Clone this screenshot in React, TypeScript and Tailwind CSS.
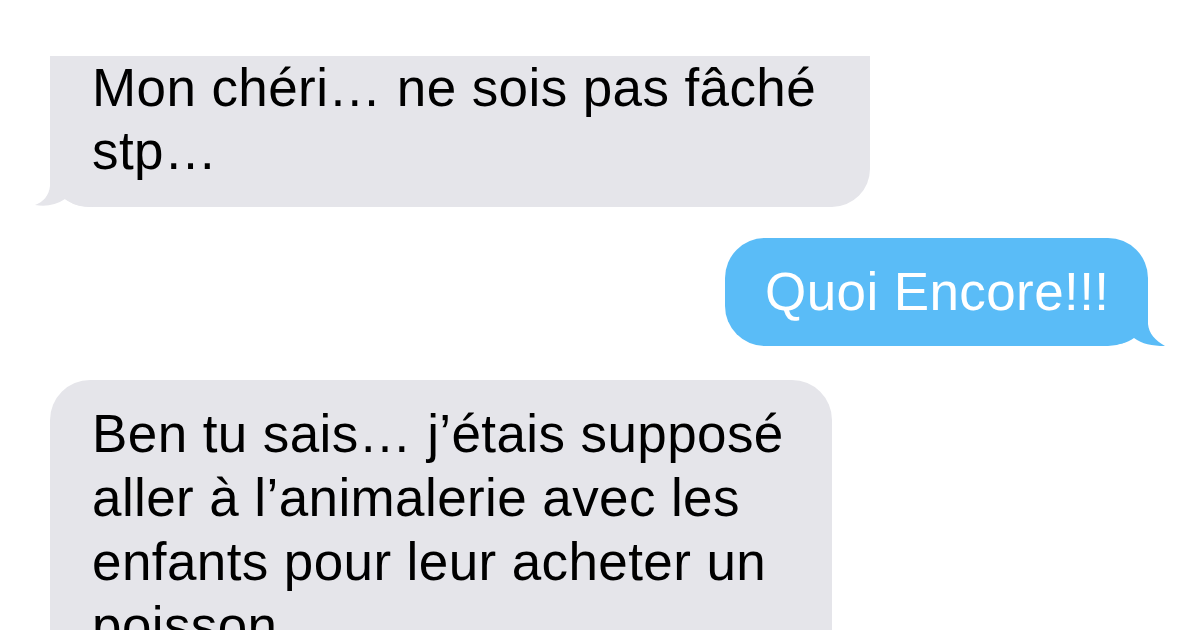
import React from "react";

const gray = "#e5e5ea";
const blue = "#5abcf7";

function TailLeft({ color }: { color: string }) {
    return (
        <svg className="absolute left-[-16px] bottom-[-3px]" width="60" height="48" viewBox="0 0 60 48">
            <path d="M16 0 L16 24 C15 34 9 40 1 43 C12 45 22 43 31 37 C38 42 46 45 60 45 L60 0 Z" fill={color} />
        </svg>
    );
}

function TailRight({ color }: { color: string }) {
    return (
        <svg className="absolute right-[-18px] bottom-[-2px]" width="60" height="48" viewBox="0 0 60 48">
            <path d="M42 0 L42 24 C43 34 49 40 59 46 C46 46 36 44 28 38 C21 43 13 45 0 45 L0 0 Z" fill={color} />
        </svg>
    );
}

export default function App() {
    return (
        <div className="w-[1200px] h-[630px] overflow-hidden bg-white flex flex-col font-['Liberation_Sans',Arial,sans-serif] text-[53px] tracking-[0.4px] text-black">
            {/* Received */}
            <div className="relative shrink-0 ml-[50px] mt-[56px] w-[820px] h-[151px] rounded-b-[38px] pl-[42px] leading-[63px] whitespace-nowrap" style={{ backgroundColor: gray }}>
                <TailLeft color={gray} />
                <div className="relative">
                    Mon chéri… ne sois pas fâché
                    <br />
                    stp…
                </div>
            </div>

            {/* Sent */}
            <div className="relative shrink-0 self-end mr-[52px] mt-[31px] w-[423px] h-[108px] rounded-[40px] pl-[40px] pt-[22px] leading-[63px] whitespace-nowrap text-white" style={{ backgroundColor: blue }}>
                <TailRight color={blue} />
                <div className="relative">Quoi Encore!!!</div>
            </div>

            {/* Received */}
            <div className="relative shrink-0 ml-[50px] mt-[34px] w-[782px] h-[320px] rounded-t-[40px] pl-[42px] pt-[22px] leading-[64px] whitespace-nowrap" style={{ backgroundColor: gray }}>
                Ben tu sais… j’étais supposé
                <br />
                aller à l’animalerie avec les
                <br />
                enfants pour leur acheter un
                <br />
                poisson…
            </div>
        </div>
    );
}
